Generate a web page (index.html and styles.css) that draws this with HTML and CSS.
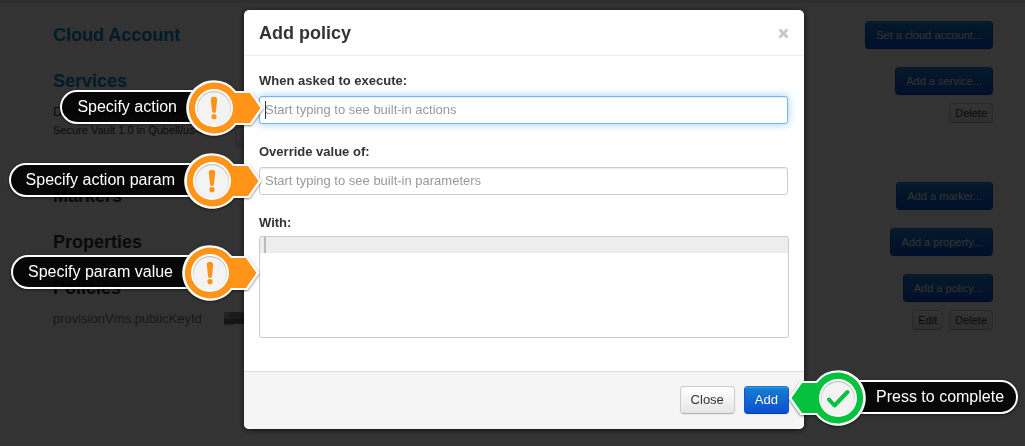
FILE: index.html
```html
<!DOCTYPE html>
<html lang="en">
<head>
<meta charset="utf-8">
<title>Add policy</title>
<link rel="stylesheet" href="styles.css">
</head>
<body>
<main class="page">
  <section class="section">
    <header class="section-head"><h3><a href="#account">Cloud Account</a></h3><button class="btn btn-primary btn-sm">Set a cloud account...</button></header>
  </section>
  <section class="section section-services">
    <header class="section-head"><h3><a href="#services">Services</a></h3><button class="btn btn-primary btn-sm">Add a service...</button></header>
    <div class="item">
      <div class="item-text">
        <p>Default workflow service</p>
        <div class="item-detail"><p class="small">Secure Vault 1.0 in Qubell/us-east</p><button class="btn btn-mini btn-more" aria-label="More"></button></div>
      </div>
      <div class="actions"><button class="btn btn-mini">Delete</button></div>
    </div>
  </section>
  <section class="section">
    <header class="section-head"><h3>Markers</h3><button class="btn btn-primary btn-sm">Add a marker...</button></header>
  </section>
  <section class="section">
    <header class="section-head"><h3>Properties</h3><button class="btn btn-primary btn-sm">Add a property...</button></header>
  </section>
  <section class="section">
    <header class="section-head"><h3>Policies</h3><button class="btn btn-primary btn-sm">Add a policy...</button></header>
    <div class="item">
      <div class="item-text policy"><span>provisionVms.publicKeyId</span>
        <svg class="redacted" width="30" height="16" viewBox="0 0 30 16" aria-hidden="true"><path fill="#ccc" d="M0 2h10v14H0z"/><path fill="#aaa" d="M0 2h10v7H0z"/><path fill="#666" d="M0 9h30v5H0z"/><path fill="#888" d="M5 2h25v7H5z"/></svg>
      </div>
      <div class="actions"><button class="btn btn-mini">Edit</button><button class="btn btn-mini">Delete</button></div>
    </div>
  </section>
</main>

<div class="backdrop">
  <form class="modal" role="dialog" aria-labelledby="title">
    <header class="modal-head">
      <h2 id="title">Add policy</h2>
      <button type="button" class="close" aria-label="Dismiss"><svg width="11" height="11" viewBox="0 0 11 11"><path d="M1.500 1.500 9.500 9.500M9.500 1.500 1.500 9.500" stroke="#c8c8c8" stroke-width="3"/></svg></button>
    </header>
    <div class="modal-body">
      <label for="action">When asked to execute:</label>
      <input id="action" class="field active" type="text" placeholder="Start typing to see built-in actions">
      <label for="param">Override value of:</label>
      <input id="param" class="field" type="text" placeholder="Start typing to see built-in parameters">
      <label for="value">With:</label>
      <textarea id="value" class="editor"></textarea>
    </div>
    <footer class="modal-foot">
      <button type="button" class="btn">Close</button>
      <button type="button" class="btn btn-primary">Add</button>
    </footer>
  </form>
</div>

<svg class="defs" aria-hidden="true">
  <defs>
    <g id="pin">
      <path d="M30 2.2A27.8 27.8 0 1 0 52 47H67.5L79.5 30 67.5 13H52A27.8 27.8 0 0 0 30 2.2Z" fill="#fff"/>
      <path d="M30 4.5A25.5 25.5 0 1 0 51 45H66L76.5 30 66 15H51A25.5 25.5 0 0 0 30 4.5Z" fill="currentColor"/>
      <circle cx="30" cy="30" r="19" fill="#fff"/>
      <circle cx="30" cy="30" r="17" fill="#c4c4c4"/>
      <circle cx="30" cy="30.7" r="16.5" fill="#f3f3f3"/>
    </g>
    <g id="warn">
      <use href="#pin"/>
      <path d="M26.800 22a3.200 3.200 0 0 1 6.400 0L32 33a2 2 0 0 1-4 0Z" fill="currentColor"/>
      <circle cx="30" cy="38.700" r="2.600" fill="currentColor"/>
    </g>
  </defs>
</svg>

<div class="callout callout-action"><span class="pill">Specify action</span><svg class="marker" width="82" height="62" viewBox="0 0 82 62"><use href="#warn"/></svg></div>
<div class="callout callout-param"><span class="pill">Specify action param</span><svg class="marker" width="82" height="62" viewBox="0 0 82 62"><use href="#warn"/></svg></div>
<div class="callout callout-value"><span class="pill">Specify param value</span><svg class="marker" width="82" height="62" viewBox="0 0 82 62"><use href="#warn"/></svg></div>
<div class="callout callout-done"><svg class="marker" width="82" height="62" viewBox="0 0 82 62"><use href="#pin" transform="translate(82 0) scale(-1 1)"/><path d="M43 31.500 48.500 37.500 61.500 24" fill="none" stroke="currentColor" stroke-width="4" stroke-linecap="round" stroke-linejoin="round"/></svg><span class="pill">Press to complete</span></div>
</body>
</html>
```
FILE: styles.css
```css
* { box-sizing: border-box; }
body {
  margin: 0;
  min-height: 100vh;
  background: #fff;
  color: #333;
  font: 13px/18px "Liberation Sans", Arial, sans-serif;
}
h2, h3, p { margin: 0; }
h2, h3 { font-size: 18px; line-height: 28px; }
a { color: #08c; text-decoration: none; }
button, input, textarea { font: inherit; }

.page {
  border-top: 3px solid #eaeaea;
  padding: 18px 32px 0 53px;
}
.section { padding-bottom: 18px; }
.section-services { min-height: 115px; }
.section-head, .item {
  display: flex;
  justify-content: space-between;
  align-items: flex-start;
}
.section-head { margin-bottom: 8px; }
.section:not(:has(.item)) .section-head { margin-bottom: 0; }
.item-text.policy { display: flex; gap: 22px; color: #777; }
.item-detail { display: flex; align-items: flex-start; }
.small { width: 182px; font-size: 11px; white-space: nowrap; }
.actions { display: flex; gap: 6px; }

.btn {
  height: 28px;
  padding: 0 10px;
  border: 1px solid #ccc;
  border-bottom-color: #b3b3b3;
  border-radius: 4px;
  background: linear-gradient(#fff, #e6e6e6);
  color: #333;
  line-height: 18px;
  box-shadow: inset 0 1px 0 rgba(255, 255, 255, .2), 0 1px 2px rgba(0, 0, 0, .05);
}
.btn-primary {
  border-color: #1a74c4 #0d55c8 #0a3fa8;
  background: linear-gradient(#1480d2, #0c4fd4);
  color: #fff;
  text-shadow: 0 -1px 0 rgba(0, 0, 0, .25);
}
.btn-sm { font-size: 11px; }
.btn-mini { height: 20px; padding: 0 5px; font-size: 11px; }
.btn-more { width: 40px; margin-top: 6px; }

.backdrop {
  position: fixed;
  inset: 0;
  display: flex;
  justify-content: center;
  align-items: flex-start;
  padding: 10px 0 0 23px;
  background: rgba(0, 0, 0, .8);
}
.modal {
  width: 100%;
  max-width: 560px;
  border-radius: 5px;
  background: #fff;
  box-shadow: 0 1px 6px rgba(0, 0, 0, .7);
  overflow: hidden;
}
.modal-head {
  display: flex;
  justify-content: space-between;
  align-items: center;
  padding: 9px 15px 8px;
  border-bottom: 1px solid #eee;
}
.close { display: flex; padding: 0; border: 0; background: none; }
.modal-body { padding: 16px 15px 33px; }
.modal-body label {
  display: block;
  margin-bottom: 6px;
  font-weight: bold;
}
.field {
  display: block;
  width: calc(100% - 1px);
  height: 28px;
  margin-bottom: 19px;
  padding: 0 5px 2px;
  border: 1px solid #ccc;
  border-radius: 3px;
  background: #fff;
  box-shadow: inset 0 1px 1px rgba(0, 0, 0, .075);
}
.field::placeholder { color: #999; opacity: 1; }
.field.active {
  border-color: #73b4f2;
  background: linear-gradient(#333, #333) 5px 4px / 1px 18px no-repeat #fff;
  box-shadow: inset 0 1px 1px rgba(0, 0, 0, .075), 0 0 8px rgba(82, 168, 236, .6);
}
.editor {
  display: block;
  width: 100%;
  height: 102px;
  margin-top: -2px;
  padding: 0 4px;
  border: 1px solid #ccc;
  border-radius: 3px;
  background:
    linear-gradient(#bbb, #bbb) 4px 0 / 2px 16px no-repeat,
    linear-gradient(#ededed, #ededed) 0 0 / 100% 16px no-repeat #fff;
  line-height: 16px;
  resize: none;
}
.modal-foot {
  display: flex;
  justify-content: flex-end;
  gap: 9px;
  padding: 14px 15px 15px;
  border-top: 1px solid #ddd;
  background: #f5f5f5;
}

.defs { position: absolute; width: 0; height: 0; }
.callout {
  position: absolute;
  display: flex;
  align-items: center;
  height: 62px;
  color: #ff9419;
}
.callout-action { top: 78px; right: 759px; }
.callout-param { top: 151px; right: 761px; }
.callout-value { top: 243px; right: 763px; }
.callout-done { top: 368px; left: 786px; color: #04c23e; }
.pill {
  height: 34px;
  padding: 0 27px 0 15px;
  margin: 0 -20px 4px 0;
  border: 2px solid #fff;
  border-right: 0;
  border-radius: 17px 0 0 17px;
  background: rgba(0, 0, 0, .85);
  color: #fff;
  font-size: 16px;
  line-height: 30px;
  white-space: nowrap;
  box-shadow: 0 1px 3px rgba(0, 0, 0, .5);
}
.callout-done .pill {
  padding: 0 12px 0 28px;
  margin: 0 0 4px -20px;
  border: 2px solid #fff;
  border-left: 0;
  border-radius: 0 17px 17px 0;
}
.marker {
  position: relative;
  z-index: 1;
  flex: none;
  overflow: visible;
  filter: drop-shadow(0 1px 1px rgba(0, 0, 0, .5));
}
```
